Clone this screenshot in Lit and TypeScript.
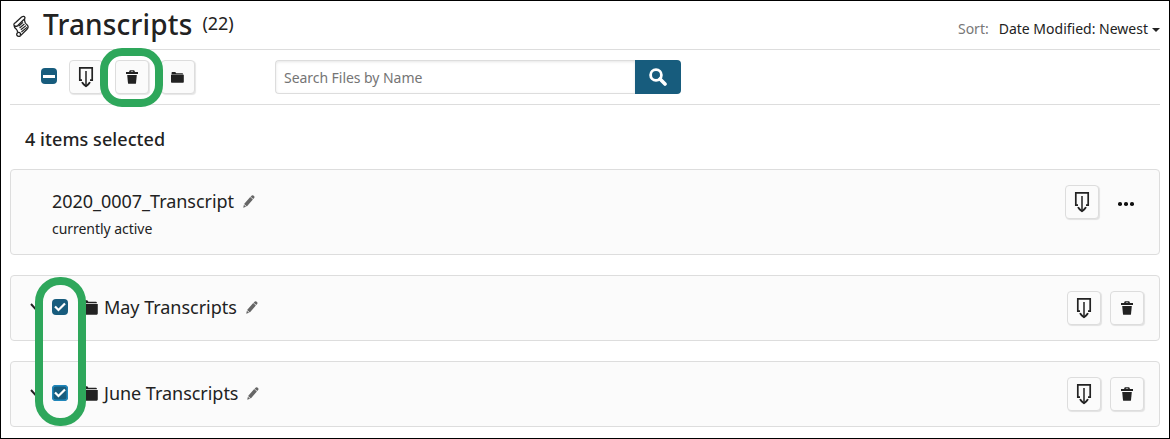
import { LitElement, html, css } from "lit";
import { customElement } from "lit/decorators.js";

const download = html`<svg width="16" height="22" viewBox="0 0 16 22"><path d="M4 14.2H1.8V1.8H14.2V14.2H12" fill="none" stroke="#222" stroke-width="1.7"/><path d="M8 5V19" stroke="#444" stroke-width="1.8"/><path d="M4 16.2Q5 18.2 8 20.2Q11 18.2 12 16.2" fill="none" stroke="#222" stroke-width="1.9"/></svg>`;
const trash = html`<svg width="12" height="14" viewBox="0 0 12 14"><path d="M0 2.1H3L3.8 .3H8.2L9 2.1H12V4H0zM4.7 2.1H7.3L7 1.4H5z" fill="#222" fill-rule="evenodd"/><path d="M1.2 4.9H10.8L10 13.2Q9.9 13.8 9.3 13.8H2.7Q2.1 13.8 2 13.2z" fill="#222"/></svg>`;
const folder = html`<svg class="folder" viewBox="0 0 14 12" preserveAspectRatio="none"><path d="M.6 2.4V1Q.6.1 1.3.1H4.6L5.6 1.3H12.2Q12.9 1.3 13 2V2.6H.6z" fill="#222"/><path d="M0 3.1H13.8V10.8Q13.8 11.7 12.9 11.7H.9Q0 11.7 0 10.8z" fill="#222"/></svg>`;
const pencil = html`<svg class="pencil" width="12" height="13" viewBox="0 0 12 13"><path d="M8.8.6Q9.6-.1 10.4.5L11.2 1.3Q11.9 2 11.3 2.8L10.3 4L7.6 1.7zM7.2 2.1L9.9 4.4L3.8 11.4L1.1 9.1zM.9 9.7L3.1 11.7L.2 12.7z" fill="#666"/></svg>`;
const chevron = html`<svg class="chevron" width="12" height="8" viewBox="0 0 12 8"><path d="M2 1L6.5 6L11 1" fill="none" stroke="#222" stroke-width="1.9"/></svg>`;

@customElement("app-root")
export class AppRoot extends LitElement {
  static styles = css`
    :host { display: block; position: relative; box-sizing: border-box; width: 1170px; height: 439px; border: 1px solid #000; background: #fff; color: #222; padding: 0 9px; font: 14px/20px "Noto Sans", sans-serif; overflow: hidden; }
    * { box-sizing: border-box; }
    svg { display: block; flex: none; }
    header { display: flex; height: 49px; border-bottom: 1px solid #ddd; align-items: flex-start; }
    .scroll { margin: 14px 0 0 3px; }
    h1 { margin: 3px 0 0 14px; font-size: 28px; line-height: 40px; font-weight: 500; letter-spacing: .16px; }
    .count { font-size: 18px; line-height: 24px; margin: 10px 0 0 10px; letter-spacing: -.05px; }
    .sort { margin: 18px 0 0 auto; display: flex; }
    .sort .label { color: #777; margin-right: 10px; }
    .caret { margin: 9px 0 0 4px; border: 4px solid transparent; border-top-color: #222; border-bottom: 0; height: 4px; }
    .tools { display: flex; height: 55px; border-bottom: 1px solid #ddd; padding: 10px 0 0 31px; }
    .check { width: 16px; height: 16px; border-radius: 4px; background: #175c7d; display: flex; align-items: center; justify-content: center; flex: none; }
    .check.focus { box-shadow: inset 0 0 0 1.5px #2088bd; }
    .tools .check { margin: 8px 12px 0 0; }
    .dash { width: 12px; height: 3px; background: #fff; }
    .btn { width: 34px; height: 34px; border: 1px solid #ddd; border-radius: 4px; background: #fbfbfb; box-shadow: 1px 1px 1px rgba(0,0,0,.1); display: flex; align-items: center; justify-content: center; padding: 0 1px 0 0; flex: none; }
    .tools .btn { margin-right: 12px; }
    .btn .folder { width: 13px; height: 11px; }
    .search { display: flex; margin-left: 68px; }
    .field { width: 360px; height: 34px; border: 1px solid #ddd; border-right: 0; border-radius: 4px 0 0 4px; box-shadow: inset 0 1px 3px rgba(0,0,0,.1); padding: 7px 8px; color: #757575; line-height: 19px; letter-spacing: -.05px; }
    .go { width: 46px; height: 34px; background: #175c7d; border-radius: 0 4px 4px 0; display: flex; align-items: center; justify-content: center; }
    h2 { margin: 22px 0 17px 15px; font-size: 18px; line-height: 25px; font-weight: 500; letter-spacing: .07px; }
    .card { display: flex; height: 66px; border: 1px solid #ddd; border-radius: 4px; background: #fbfbfb; padding: 15px 15px 0 18px; margin-bottom: 20px; }
    .card.active { height: 86px; padding-left: 41px; padding-right: 16px; }
    .line { display: flex; height: 32px; align-items: center; }
    .name { font-size: 18px; line-height: 32px; letter-spacing: -.03px; }
    .pencil { margin-left: 9px; }
    .note { line-height: 20px; margin-top: 2px; letter-spacing: -.04px; }
    .chevron { margin-right: 11px; }
    .line .folder { width: 16px; height: 15px; margin: 0 6px 0 14px; }
    .actions { display: flex; gap: 9px; margin-left: auto; }
    .more { display: flex; gap: 2.4px; padding: 17px 9.4px 0 10px; }
    .more i { width: 3.6px; height: 3.6px; border-radius: 50%; background: #111; }
    .ring { position: absolute; border: 8px solid #2ea75b; pointer-events: none; }
    .r1 { left: 99px; top: 47px; width: 63px; height: 59px; border-radius: 22px; }
    .r2 { left: 34px; top: 276px; width: 51px; height: 149px; border-radius: 25px; }
  `;

  private row(name: string, focus: boolean) {
    return html`<section class="card"><div class="line">${chevron}
      <span class="check ${focus ? "focus" : ""}"><svg width="12" height="10" viewBox="0 0 12 10"><path d="M1 4.4L4.5 8L11 1.4" fill="none" stroke="#fff" stroke-width="2.2"/></svg></span>
      ${folder}<span class="name">${name}</span>${pencil}</div>
      <div class="actions"><button class="btn">${download}</button><button class="btn">${trash}</button></div></section>`;
  }

  render() {
    return html`
      <header>
        <svg class="scroll" width="16" height="23" viewBox="0 0 16 23"><g fill="none" stroke="#222" stroke-width="1.3" stroke-linejoin="round"><path d="M2.6 7.6L8.6 2Q11.2 .3 12 2.8Q12 4.2 10.6 4.8L4.6 10.8Q2.3 12 1 10Q.6 8.4 2.6 7.6zM11.6 4.2Q11 7.6 14.4 10.2Q16 12.4 14 14.2L7.6 20.6Q5.4 22.2 4 20.5Q3 18.4 5.2 17.4Q7.8 17 7.4 20.4M1 10.4Q1.2 12.8 3.6 14.6Q4.8 15.8 4.4 17.6"/><path stroke-width="1.2" d="M5.6 11.2L10 7.4M6.6 13L11.4 9M7.8 14.8L13 10.6M8.4 17L14 12.4"/></g></svg>
        <h1>Transcripts</h1><span class="count">(22)</span>
        <div class="sort"><span class="label">Sort:</span><span>Date Modified: Newest</span><span class="caret"></span></div>
      </header>
      <div class="tools">
        <span class="check"><span class="dash"></span></span>
        <button class="btn">${download}</button><button class="btn">${trash}</button><button class="btn">${folder}</button>
        <div class="search"><div class="field">Search Files by Name</div>
          <div class="go"><svg width="18" height="18" viewBox="0 0 18 18"><circle cx="7" cy="7" r="5.4" fill="none" stroke="#fff" stroke-width="2.8"/><path d="M11 11L16 16" stroke="#fff" stroke-width="3.6" stroke-linecap="round"/></svg></div></div>
      </div>
      <h2>4 items selected</h2>
      <section class="card active"><div><div class="line"><span class="name">2020_0007_Transcript</span>${pencil}</div><div class="note">currently active</div></div>
        <div class="actions"><button class="btn">${download}</button><span class="more"><i></i><i></i><i></i></span></div></section>
      ${this.row("May Transcripts", false)}${this.row("June Transcripts", true)}
      <div class="ring r1"></div><div class="ring r2"></div>`;
  }
}
